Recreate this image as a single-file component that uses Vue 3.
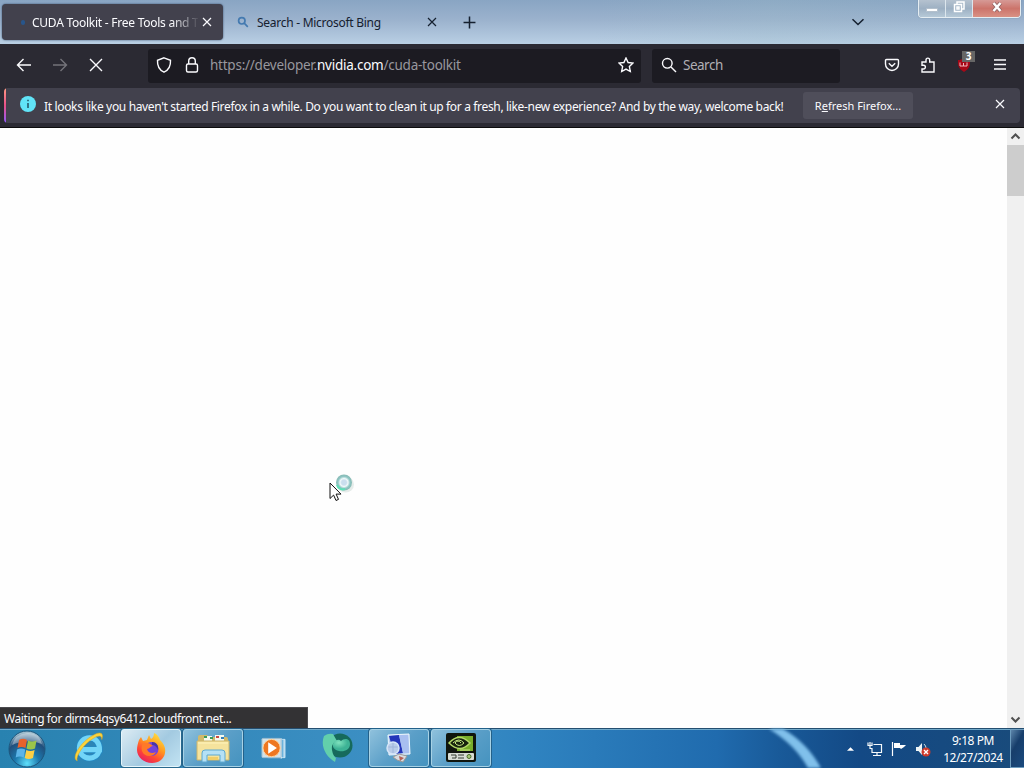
<!-- App.vue -->

<template>
  <div class="desktop">
    <header class="tabs">
      <div class="tab active">
        <span class="dot"></span>
        <span class="tab-title first">CUDA Toolkit - Free Tools and T</span>
        <svg class="x" viewBox="0 0 10 10"><path d="M1 1l8 8M9 1L1 9" /></svg>
      </div>
      <div class="tab">
        <svg class="bing" viewBox="0 0 12 12"><circle cx="4.8" cy="4.8" r="3.2" /><path d="M7.2 7.2l3.6 3.6" /></svg>
        <span class="tab-title second">Search - Microsoft Bing</span>
        <svg class="x" viewBox="0 0 10 10"><path d="M1 1l8 8M9 1L1 9" /></svg>
      </div>
      <svg class="plus" viewBox="0 0 12 12"><path d="M6 .5v11M.5 6h11" /></svg>
      <svg class="chevron" viewBox="0 0 14 8"><path d="M1.500 1.200L7 6.500l5.500-5.300" /></svg>
      <div class="window-buttons">
        <span class="wb min"><i></i></span>
        <span class="wb max">
          <svg viewBox="0 0 14 14"><path d="M5 4V2h7v7h-2" /><rect x="2.500" y="4.500" width="7" height="7" /><rect x="5" y="7" width="2" height="2" /></svg>
        </span>
        <span class="wb close">
          <svg viewBox="0 0 14 14"><path class="edge" d="M3.500 3l7 8M10.500 3l-7 8" /><path d="M3.500 3l7 8M10.500 3l-7 8" /></svg>
        </span>
      </div>
    </header>

    <nav class="toolbar">
      <svg class="nav-icon" viewBox="0 0 16 16"><path d="M15 8H1.500M7.500 2L1.500 8l6 6" /></svg>
      <svg class="nav-icon dim" viewBox="0 0 16 16"><path d="M1 8h13.500M8.500 2l6 6-6 6" /></svg>
      <svg class="nav-icon" viewBox="0 0 16 16"><path d="M2 2l12 12M14 2L2 14" /></svg>
      <div class="urlbar">
        <svg class="field-icon" viewBox="0 0 16 16"><path d="M8 .8l6.500 2.500c.3 5-1.200 9.500-6.500 11.900C2.700 12.800 1.200 8.300 1.500 3.300z" /></svg>
        <svg class="field-icon lock" viewBox="0 0 16 16"><rect x="2.500" y="7" width="11" height="8" rx="1.500" /><path d="M4.700 7V4a3.300 3.300 0 0 1 6.600 0v3" /></svg>
        <span class="url">https://developer.<b>nvidia.com</b>/cuda-toolkit</span>
        <svg class="field-icon star" viewBox="0 0 16 16"><path d="M8 1l2.100 4.500 4.900.6-3.600 3.400.9 5L8 12.100l-4.300 2.400.9-5L1 6.100l4.900-.6z" /></svg>
      </div>
      <div class="searchbar">
        <svg class="field-icon" viewBox="0 0 16 16"><circle cx="6.300" cy="6.300" r="4.800" /><path d="M10 10l5 5" /></svg>
        <span>Search</span>
      </div>
      <div class="extras">
        <svg viewBox="0 0 16 16"><path d="M2.500 2.500h11q1 0 1 1V7a6.500 6.500 0 0 1-13 0V3.500q0-1 1-1zM4.800 6.200L8 9.200l3.200-3" /></svg>
        <svg viewBox="0 0 16 16"><path d="M2 5h4V3a1.800 1.800 0 0 1 3.700 0v2H14v10H2v-3h1.500a1.900 1.900 0 0 0 0-3.800H2z" /></svg>
        <span class="ublock">
          <svg viewBox="0 0 16 16"><path class="shield" d="M8 1c2 1.500 4 2 6 2 .3 6-1 9-6 12C3 12 1.700 9 2 3c2 0 4-.5 6-2z" /><path class="mark" d="M4 5.500V9h3.500V6v3H11V5.500" /></svg>
          <em>3</em>
        </span>
        <svg viewBox="0 0 16 16"><path d="M2 3h12M2 7.500h12M2 12h12" /></svg>
      </div>
    </nav>

    <div class="notice">
      <div class="bar">
        <svg class="info" viewBox="0 0 16 16"><circle cx="8" cy="8" r="8" /><path d="M8 7v5M8 3.700v1.600" /></svg>
        <span class="message">It looks like you haven't started Firefox in a while. Do you want to clean it up for a fresh, like-new experience? And by the way, welcome back!</span>
        <button>R<u>e</u>fresh Firefox...</button>
        <svg class="x" viewBox="0 0 10 10"><path d="M1 1l8 8M9 1L1 9" /></svg>
      </div>
    </div>

    <main class="page">
      <div class="status">Waiting for dirms4qsy6412.cloudfront.net...</div>
      <div class="scrollbar">
        <svg viewBox="0 0 17 17"><path d="M4.500 10.500l4-4 4 4" /></svg>
        <div class="thumb"></div>
        <svg class="down" viewBox="0 0 17 17"><path d="M4.500 6.500l4 4 4-4" /></svg>
      </div>
      <svg class="cursor" viewBox="0 0 28 30">
        <defs>
          <radialGradient id="ring"><stop offset=".3" stop-color="#c9deee" /><stop offset=".5" stop-color="#eff8fa" /><stop offset=".75" stop-color="#8fc6c4" /><stop offset="1" stop-color="#86b9b3" /></radialGradient>
        </defs>
        <ellipse cx="17.500" cy="11.500" rx="8.500" ry="8" fill="#e6ecea" />
        <circle cx="16" cy="9.500" r="8" fill="url(#ring)" />
        <path d="M9 12c1 4 5 5 8 4" stroke="#5fe0b8" stroke-width="2" fill="none" />
        <path d="M2 10v15.500l3.600-3.400 2.400 5.400 2.500-1.100-2.400-5.300H13z" fill="#fff" stroke="#111" />
      </svg>
    </main>

    <footer class="taskbar">
      <svg class="glow" viewBox="0 0 70 40" preserveAspectRatio="none"><path d="M0 0h14q24 14 38 40H39Q26 16 0 0z" /></svg>
      <div class="start">
        <svg viewBox="0 0 38 38">
          <defs>
            <radialGradient id="orb" cx=".5" cy=".9" r=".85"><stop offset="0" stop-color="#5fe0fb" /><stop offset=".4" stop-color="#1c78ad" /><stop offset=".75" stop-color="#214f7c" /><stop offset="1" stop-color="#9fbdcd" /></radialGradient>
          </defs>
          <circle cx="19" cy="19" r="18" fill="url(#orb)" stroke="#1c567d" />
          <path d="M4 15Q7 4 19 3t15 11q-14-6-30 1z" fill="#fff" opacity=".35" />
          <path d="M11 10q4-2.500 8 0l-1.500 8q-4-2-8 0z" fill="#e8622c" />
          <path d="M20 10.500q4 2 8.500 0L27 18.500q-4.500 2-8.500 0z" fill="#9ac54a" />
          <path d="M9 19.500q4-2 8.200 0l-1.500 8q-4-2-8 0z" fill="#5cb4e8" />
          <path d="M18.300 20q4 2 8.300 0L25 28q-4.500 2-8.300 0z" fill="#fccf45" />
        </svg>
      </div>
      <div v-for="app in apps" :key="app.name" class="app" :class="app.state">
        <svg v-if="app.name === 'ie'" viewBox="1 2 30 30">
          <path d="M25.500 20c-1.500 4-4.500 6.500-9 6.500-5.500 0-9.500-4-9.500-9.500S11 7.500 16.500 7.500 26 12 25.800 18.500H9" stroke="#238bc8" stroke-width="6" fill="none" />
          <path d="M25.500 20c-1.500 4-4.500 6.500-9 6.500-5.500 0-9.500-4-9.500-9.500S11 7.500 16.500 7.500 26 12 25.800 18.500H9" stroke="#72d5f7" stroke-width="4.800" fill="none" />
          <path d="M5 29C-1 27 7 12 20 5c7-4 10-2 8 4 0-4-3-4-8-1C11 13 3 25 5 29z" fill="#fbd33b" stroke="#dea81d" stroke-width=".5" />
        </svg>
        <svg v-else-if="app.name === 'firefox'" viewBox="0 0 32 32">
          <defs>
            <linearGradient id="fox" x1=".8" y1="0" x2=".2" y2="1"><stop offset="0" stop-color="#ffe646" /><stop offset=".4" stop-color="#ff9a20" /><stop offset=".7" stop-color="#ff4834" /><stop offset="1" stop-color="#e31b68" /></linearGradient>
          </defs>
          <path d="M4 8l2-3 2 4 4-1 2-5 2 4c2-1 3-3 3-6 3 1 5 4 6 7 4 4 6 8 5 13-1 6-6 10-13 10-8 0-15-6-15-13 0-4 1-7 2-10z" fill="url(#fox)" />
          <circle cx="16.500" cy="17" r="7" fill="#7342db" />
          <path d="M8 11c4-1 7 0 10 3-3 0-3 3-6 3 1 4 5 5 9 3-3 6-12 5-14-1-1-3 0-6 1-8z" fill="#ff7928" />
          <path d="M17 10c4 0 7 3 6 8-1-3-3-5-6-5z" fill="#4935a7" />
        </svg>
        <svg v-else-if="app.name === 'explorer'" class="wide" viewBox="0 0 34 32">
          <path d="M2 5q0-2 2-2h7l2 2h17q2 0 2 2v20H2z" fill="#d2b96b" />
          <path d="M8 4h8v5H8zM19 3h9v7h-9z" fill="#f5faef" />
          <path d="M8 5h3M14 6h3" stroke="#3d9b58" stroke-width="2" /><path d="M20 5h3" stroke="#cc4a44" stroke-width="2" /><path d="M25 6h3" stroke="#347eb9" stroke-width="2" />
          <path d="M1 9h32v19H1z" fill="#f5e39d" stroke="#cdb66c" /><path d="M2 11h30" stroke="#fff4bc" />
          <path d="M6 30v-9q0-3 3-3h17q3 0 3 3v9h-5v-7H11v7z" fill="#b5e1f5" stroke="#5ea9d1" />
          <path d="M12 25h10v3H12z" fill="#f0ce69" />
        </svg>
        <svg v-else-if="app.name === 'player'" class="small" viewBox="3 4 26 25">
          <path d="M10 7h18v19H10z" fill="#6cb2dc" stroke="#b9def1" /><path d="M24 6v21M27 7v19" stroke="#e8f6fb" />
          <rect x="4" y="6" width="20" height="20" rx="1" fill="#d0e2eb" stroke="#9cbdd0" />
          <circle cx="14" cy="16" r="9" fill="#ee7721" stroke="#ffd7a2" /><path d="M10.500 10l9 6-9 6z" fill="#fff" />
        </svg>
        <svg v-else-if="app.name === 'globe'" viewBox="0 0 32 32">
          <defs><radialGradient id="teal" cx=".35" cy=".3"><stop offset="0" stop-color="#7fe2bd" /><stop offset="1" stop-color="#3db295" /></radialGradient></defs>
          <ellipse cx="19" cy="13.500" rx="12.500" ry="12" fill="#166a5c" />
          <path d="M3 4q4-3 9-2l4 7q-6 2-5 9 1 6 4 8l-1 4C5 25-1 14 3 4z" fill="#62cfab" />
          <path d="M13 10q4-4 7-1c3-3 9-3 9 3s-6 8-11 7-8-5-5-9z" fill="url(#teal)" />
        </svg>
        <svg v-else-if="app.name === 'remote'" viewBox="4 0 32 32">
          <path d="M9 3l21-1 1 20-21 1z" fill="#b9d0f0" stroke="#eff8ff" /><path d="M10 4l10-1 4 18-9 1z" fill="#2436ba" /><path d="M20 3h9l1 18h-6z" fill="#a8bff0" />
          <circle cx="14" cy="16" r="6" fill="#b9cce9" stroke="#d6e5f7" stroke-width="1.500" /><path d="M9.500 15h9M14 11v10" stroke="#9fb4db" />
          <path d="M14 25l6-3 8 2-4 6-6-2z" fill="#d9dce0" stroke="#9c9996" /><path d="M20 24l5 2-4 3z" fill="#b56258" />
        </svg>
        <svg v-else viewBox="0 0 32 32">
          <rect x="1" y="1" width="30" height="29" rx="2" fill="#10150d" />
          <path d="M12 4h16v15H12z" fill="#78ad2b" />
          <path d="M4 11Q14 0 25 11 15 22 4 11z" fill="#18230f" stroke="#b2d868" stroke-width="1.500" /><path d="M8 11q6-6 11 0-5 5-9 0 3-4 6 0M15 18q7 0 10 0" stroke="#c5e882" fill="none" />
          <rect x="3" y="21" width="26" height="7" rx="1" fill="#d8ddd4" /><path d="M6 23h5v3H7M13 23h6M13 26h6" stroke="#343c32" fill="none" /><circle cx="24" cy="24.500" r="2" fill="#a8ca78" stroke="#486d29" />
        </svg>
      </div>
      <div class="tray">
        <svg class="up" viewBox="0 0 8 5"><path d="M0 5l4-4 4 4z" fill="#fff" /></svg>
        <svg class="net" viewBox="0 0 16 16"><path d="M6.500 3.500h8v8H5V7M10 12v2.500M6 14.500h8M1 1.500v3h4v-3M3 1v6.500h2" fill="none" stroke="#f5f9fb" stroke-width="1.200" /></svg>
        <svg class="flag" viewBox="0 0 16 16"><path d="M1.500 1v14" stroke="#fff" stroke-width="1.200" /><path d="M3 2h6v2h6l-2 2-3 2-1-1H3z" fill="#fff" /></svg>
        <svg class="sound" viewBox="0 0 16 16"><path d="M1 6h2.500L7 2v12l-3.500-4H1z" fill="#edf4f6" /><path d="M9 3q2 2 2 4" stroke="#cfdfe6" fill="none" /><circle cx="11" cy="11" r="4.500" fill="#cf3b2b" /><path d="M9 9l4 4M13 9l-4 4" stroke="#fff" stroke-width="1.400" /></svg>
        <div class="clock"><span>9:18 PM</span><span>12/27/2024</span></div>
        <div class="show-desktop"></div>
      </div>
    </footer>
  </div>
</template>

<script setup>
const apps = [
  { name: 'ie', state: '' },
  { name: 'firefox', state: 'focused' },
  { name: 'explorer', state: 'open' },
  { name: 'player', state: '' },
  { name: 'globe', state: '' },
  { name: 'remote', state: 'open' },
  { name: 'nvidia', state: 'open' },
];
</script>

<style>
body {
  margin: 0;
  overflow: hidden;
}
</style>

<style scoped>
* {
  box-sizing: border-box;
}
.desktop {
  width: 1024px;
  height: 768px;
  display: flex;
  flex-direction: column;
  font: 12px "Noto Sans", "Open Sans", sans-serif;
  overflow: hidden;
  white-space: nowrap;
}
svg {
  display: block;
  flex: none;
}

/* tab strip */
.tabs {
  height: 44px;
  display: flex;
  align-items: center;
  background: linear-gradient(100deg, transparent 58%, #9ec0c733 75%, transparent), linear-gradient(#89a5c3, #9bb2cd 45%, #b9cfe4);
  color: #15202f;
}
.tab {
  display: flex;
  align-items: center;
  height: 36px;
  width: 222px;
}
.tab.active {
  width: 221px;
  margin-left: 2px;
  background: #42414d;
  color: #fbfbfe;
  border-radius: 4px;
  box-shadow: 0 0 2px #304765;
}
.dot {
  width: 4px;
  height: 5px;
  margin: 0 7px 0 19px;
  border-radius: 2px;
  background: #28558b;
}
.first {
  width: 166px;
  letter-spacing: -0.25px;
  mask-image: linear-gradient(90deg, #000 84%, transparent 101%);
}
.second {
  width: 166px;
  letter-spacing: -0.27px;
}
.x {
  width: 10px;
  height: 10px;
  margin-left: 4px;
}
.x, .plus, .chevron {
  fill: none;
  stroke: currentColor;
  stroke-width: 1.2;
}
.bing {
  width: 12px;
  height: 12px;
  margin: 0 8px 0 14px;
  fill: none;
  stroke: #447ab0;
  stroke-width: 1.7;
}
.plus {
  width: 13px;
  height: 13px;
  margin-left: 18px;
  stroke-width: 1.4;
}
.chevron {
  width: 14px;
  height: 8px;
  margin-left: auto;
  margin-right: 53px;
  stroke-width: 1.5;
}
.window-buttons {
  display: flex;
  align-self: flex-start;
  width: 103px;
  height: 18px;
  margin-right: 3px;
  border: 1px solid #e5edf2;
  border-top: 0;
  border-radius: 0 0 4px 4px;
  overflow: hidden;
  box-shadow: 0 0 1px #536a7e;
}
.wb {
  display: flex;
  justify-content: center;
  width: 27px;
  background: linear-gradient(#b5c2cf, #9db0c3 50%, #b6c9d7);
  border-right: 1px solid #dce6ed;
}
.wb svg {
  width: 14px;
  height: 14px;
  fill: none;
  stroke: #fff;
  stroke-width: 1.5;
}
.min i {
  width: 12px;
  height: 4px;
  margin-top: 8px;
  background: #fff;
  border: 1px solid #b3c0cc;
  border-radius: 1px;
}
.wb.close {
  flex: 1;
  border: 0;
  background: linear-gradient(#d69a96, #cc746b 50%, #d99184);
}
.wb.close svg {
  stroke-width: 2.5;
}
.wb.close .edge {
  stroke: #8d6464;
  stroke-width: 4;
}

/* navigation */
.toolbar {
  height: 44px;
  display: flex;
  align-items: center;
  background: #2b2a33;
  color: #fbfbfe;
}
.toolbar svg {
  fill: none;
  stroke: #fbfbfe;
  stroke-width: 1.4;
}
.nav-icon {
  width: 16px;
  height: 16px;
  margin-left: 16px;
  margin-right: 4px;
  margin-bottom: 2px;
}
.toolbar .dim {
  stroke: #74737a;
}
.urlbar {
  display: flex;
  align-items: center;
  width: 493px;
  height: 34px;
  margin-left: 40px;
  padding: 0 7px 0 8px;
  background: #1c1b22;
  border-radius: 3px;
}
.field-icon {
  width: 16px;
  height: 16px;
  margin-bottom: 3px;
}
.lock {
  margin-left: 12px;
}
.url {
  margin-left: 10px;
  margin-bottom: 3px;
  font-size: 13.5px;
  letter-spacing: -0.24px;
  color: #98979e;
}
.url b {
  font-weight: 400;
  color: #fbfbfe;
}
.star {
  margin-left: auto;
}
.searchbar {
  display: flex;
  align-items: center;
  gap: 6px;
  width: 188px;
  height: 34px;
  margin-left: 11px;
  padding-left: 9px;
  background: #1c1b22;
  border-radius: 3px;
  font-size: 13.5px;
  letter-spacing: -0.5px;
  color: #b0afb5;
}
.searchbar span {
  margin-bottom: 3px;
}
.extras {
  display: flex;
  align-items: center;
  justify-content: space-between;
  width: 124px;
  margin-left: 44px;
  margin-bottom: 3px;
}
.extras svg {
  width: 16px;
  height: 16px;
}
.ublock {
  position: relative;
}
.extras .shield {
  fill: #a70817;
  stroke: none;
}
.extras .mark {
  stroke: #f2b7bd;
  stroke-width: 1;
}
.ublock em {
  position: absolute;
  left: 6px;
  top: -6px;
  width: 13px;
  height: 11px;
  font: bold 10px/11px "Noto Sans", sans-serif;
  text-align: center;
  background: #666;
  color: #fff;
}

/* refresh notification */
.notice {
  height: 40px;
  padding: 0 4px;
  background: #2b2a33;
  border-bottom: 1px solid #0c0c0d;
}
.bar {
  display: flex;
  align-items: center;
  height: 35px;
  background: linear-gradient(#ff9a83, #e95088 50%, #9059ff) left / 2px 100% no-repeat #42414d;
  border-radius: 4px;
  color: #fbfbfe;
}
.info {
  width: 16px;
  height: 16px;
  margin: 0 8px 3px 16px;
  fill: #61e4f8;
  stroke: #245a6c;
  stroke-width: 1.6;
}
.info circle {
  stroke: none;
}
.message {
  width: 759px;
  margin-top: 2px;
  letter-spacing: -0.343px;
}
.bar button {
  width: 110px;
  height: 27px;
  padding: 0;
  border: 0;
  border-radius: 3px;
  background: #4f4e5a;
  color: #fbfbfe;
  font: 11px "Noto Sans", sans-serif;
}
.bar .x {
  margin: 0 15px 3px auto;
}

/* page area */
.page {
  position: relative;
  flex: 1;
  display: flex;
  align-items: flex-end;
  justify-content: space-between;
  background: #fefefe;
}
.status {
  width: 308px;
  height: 21px;
  padding-left: 4px;
  line-height: 21px;
  background: #333234;
  border: solid #4a4a4e;
  border-width: 1px 1px 0 0;
  color: #fbfbfe;
  letter-spacing: -0.41px;
}
.scrollbar {
  display: flex;
  flex-direction: column;
  align-self: stretch;
  width: 17px;
  background: #f0f0f0;
}
.scrollbar svg {
  width: 17px;
  height: 17px;
  fill: none;
  stroke: #505050;
  stroke-width: 2;
}
.thumb {
  height: 51px;
  background: #cdcdcd;
}
.scrollbar .down {
  margin-top: auto;
}
.cursor {
  position: absolute;
  left: 328px;
  top: 345px;
  width: 28px;
  height: 30px;
}

/* taskbar */
.taskbar {
  position: relative;
  display: flex;
  height: 40px;
  border-top: 1px solid #244e70;
  box-shadow: inset 0 1px #71aacb;
  background: linear-gradient(90deg, #2882b0, #3489bb 20%, #3d90c5 40%, #2f83c0 52%, #206bae 70%, #195a99 76%, #134985 84%, #194b7b);
}
.glow {
  position: absolute;
  left: 769px;
  top: 0;
  width: 70px;
  height: 39px;
  fill: #80c0eb;
  filter: blur(1.5px);
}
.start {
  width: 59px;
  padding: 1px 0 0 8px;
}
.start svg {
  width: 38px;
  height: 38px;
}
.app {
  display: flex;
  align-items: center;
  justify-content: center;
  width: 60px;
  height: 38px;
  margin-right: 2px;
  border-radius: 3px;
}
.app svg {
  width: 32px;
  height: 32px;
}
.app .wide {
  width: 34px;
}
.app .small {
  width: 25px;
  height: 25px;
  margin-right: 4px;
}
.open {
  border: 1px solid #a7d2e5;
  box-shadow: 0 0 0 1px #23618a;
  background: linear-gradient(135deg, #8fc1dc, #5b9fc8 50%, #4593bf);
}
.focused {
  border: 1px solid #e5f5fb;
  box-shadow: 0 0 0 1px #29698e;
  background: linear-gradient(135deg, #dcebf3, #a3cae1 55%, #c2e3f2);
}
.tray {
  display: flex;
  align-items: center;
  margin-left: auto;
  color: #fff;
}
.up {
  width: 7px;
  height: 5px;
  margin-right: 13px;
}
.net, .flag, .sound {
  width: 16px;
  height: 16px;
}
.flag, .sound {
  margin-left: 8px;
}
.clock {
  display: flex;
  flex-direction: column;
  align-items: center;
  width: 74px;
  margin-left: 5px;
  line-height: 17px;
  letter-spacing: -0.42px;
}
.show-desktop {
  align-self: stretch;
  width: 14px;
  border: 1px solid #6d9cbe;
  border-right: 0;
  background: linear-gradient(120deg, #5c85aa, #173e6b 40%, #1a4a7e);
}
</style>
